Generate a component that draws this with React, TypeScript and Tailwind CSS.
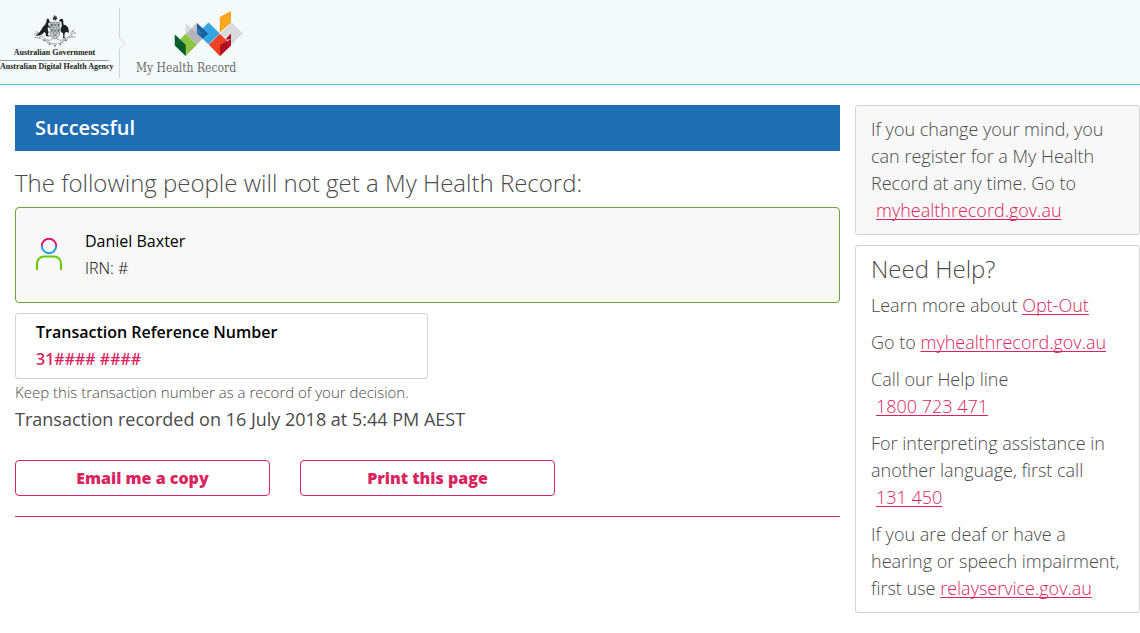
import type { ReactNode } from "react";

const CoatOfArms = () => {
  return (
    <svg
      viewBox="0 0 132 96"
      className="w-[44px] h-[32px]"
      role="img"
      aria-label="Coat of arms"
    >
      {/* star */}
      <path
        d="M66 1l2 4 4-1-1 4 3 3-4 2-1 4-4-2-4 1-0-4-3-3 4-2 0-5z"
        fill="#333"
      />
      {/* wattle */}
      <g fill="none" stroke="#8b9091" strokeWidth="2.5">
        <path d="M2 58c6-4 12-2 18 4M8 48c6 4 8 8 12 12M4 68c8-2 12 2 20 2" />
        <path d="M130 54c-8-2-12 2-18 6M124 44c-6 2-8 8-12 12M128 66c-8-2-14 2-22 2" />
        <path d="M20 62c12 2 16 14 28 14 10 0 12-8 18-8s8 8 18 8c12 0 18-12 28-12" />
        <path d="M26 72c8 8 18 2 22 12M106 72c-8 8-16 2-22 12M40 84c10-6 16 6 26 2 10 4 16-8 26-2" />
      </g>
      <g fill="#777c7d">
        <circle cx="14" cy="52" r="2" />
        <circle cx="20" cy="68" r="2" />
        <circle cx="34" cy="76" r="3" />
        <circle cx="50" cy="88" r="3" />
        <circle cx="66" cy="92" r="3" />
        <circle cx="82" cy="88" r="3" />
        <circle cx="98" cy="76" r="3" />
        <circle cx="116" cy="62" r="2" />
        <circle cx="120" cy="50" r="2" />
      </g>
      {/* shield */}
      <path
        d="M52 22h28v34c0 8-6 12-14 16-8-4-14-8-14-16z"
        fill="#d5dadb"
        stroke="#6f7475"
        strokeWidth="2"
      />
      <path
        d="M52 38h28M61 22v46M71 22v46M52 54h28"
        stroke="#7d8283"
        strokeWidth="2"
      />
      <g fill="#555a5b">
        <path d="M54 26h5v8h-5zM64 26h4v8h-4zM74 26h4v8h-4zM55 42h4v8h-4zM64 43h4v7h-4zM74 42h4v8h-4zM64 58h4v6h-4z" />
      </g>
      {/* kangaroo */}
      <path
        d="M42 9l2 4 4-2 0 6 4 5-6 2 0 7 7 6-1 2-7-3-1 7 3 9-3 9 8 1v2H38l1-8-5-5-7 7c-6 4-13 5-21 4 8-3 13-8 18-16 3-7 7-12 12-16l4-9z"
        fill="#1c1f20"
      />
      {/* emu */}
      <path
        d="M80 14c3-4 8-4 10 0 2 5 0 10 2 15 6 0 11 4 14 11l2 14-8-4-5 5-1 12 5 3H88l3-4-1-11c-6-3-8-8-7-14 2-5 4-7 3-12l-1-9-7-2z"
        fill="#1c1f20"
      />
    </svg>
  );
};

const RecordLogo = () => {
  return (
    <svg
      viewBox="163 32 208 136"
      className="w-[69px] h-[45px]"
      role="img"
      aria-label="My Health Record logo"
    >
      <path d="M198 68l34 32v34l-34-32z" fill="#d7d9db" />
      <path d="M232 68l-32 33 32 32 33-33z" fill="#b3b5b8" />
      <path d="M232 68l-17 17 17 15z" fill="#c5c7c9" />
      <path d="M267 67l34 33-34 33-34-33z" fill="#35a3df" />
      <path d="M232 68l34 33-17 15-17-16z" fill="#1a5f9f" />
      <path d="M232 82l17 18-17 0z" fill="#3a78b0" />
      <path d="M198 101l34 33-34 33-33-33z" fill="#8cc63e" />
      <path d="M165 103l33 31v34l-33-32z" fill="#045b2c" />
      <path d="M165 135l17-15 16 15" fill="none" stroke="#4f9150" strokeWidth="1.5" />
      <path d="M337 67l34 33-34 33-34-33z" fill="#d9dbdd" />
      <path d="M301 101l34 33-34 34-33-34z" fill="#ef4123" />
      <path d="M335 117v19l-33 32v-34z" fill="#b20f22" />
      <path d="M335 100v18l-17 0z" fill="#b20f22" />
      <path d="M318 118l17 17" stroke="#d5524d" strokeWidth="1.5" />
      <path d="M301 50l34-18v35l-34 31z" fill="#faa61f" />
      <path d="M233 100l34 33M267 133l34-33" stroke="#fff" strokeWidth="1" opacity=".5" />
    </svg>
  );
};

const PersonIcon = () => {
  return (
    <svg
      viewBox="0 1 26 34"
      className="w-[26px] h-[34px] shrink-0"
      fill="none"
      strokeWidth="2"
      aria-hidden="true"
    >
      <path d="M5.800 9a7.200 7.200 0 0 1 14.400 0" stroke="#e5106d" />
      <path d="M5.800 9a7.200 7.200 0 0 0 14.400 0" stroke="#15a4dc" />
      <path d="M1 33v-6.500a7 7 0 0 1 7-7h10a7 7 0 0 1 7 7V33" stroke="#66cc00" />
    </svg>
  );
};

const PinkLink = ({
  href,
  indent,
  children,
}: {
  href: string;
  indent?: boolean;
  children: ReactNode;
}) => {
  return (
    <a
      href={href}
      className={`text-[#d9245f] underline underline-offset-2 [text-decoration-skip-ink:none] ${
        indent ? "ml-[5px]" : ""
      }`}
    >
      {children}
    </a>
  );
};

const Header = () => {
  return (
    <header className="flex items-start h-[85px] bg-[#f4fafa] border-b border-[#4ac8d8]">
      <div className="flex flex-col items-center pt-[15px] w-[109px] font-['Liberation_Serif',serif] font-bold text-[#222] whitespace-nowrap">
        <CoatOfArms />
        <span className="text-[8px] leading-[12px]">Australian Government</span>
        <span className="w-full border-t border-[#999] mt-px" />
        <span className="self-start text-[8px] leading-[12px]">
          Australian Digital Health Agency
        </span>
      </div>
      <svg
        viewBox="0 0 8 70"
        className="w-[8px] h-[70px] mt-2 ml-[10px]"
        fill="none"
        stroke="#d2d6d7"
        aria-hidden="true"
      >
        <path d="M.5 0v30l5.500 5.500-5.500 5.500v29" />
      </svg>
      <div className="flex flex-col items-start pt-[11px] ml-[9px] text-[#6b6c6e] whitespace-nowrap">
        <div className="pl-[38px]">
          <RecordLogo />
        </div>
        <span className="font-['DejaVu_Serif_Condensed','DejaVu_Serif',serif] text-[12px] leading-[24px]">
          My Health Record
        </span>
      </div>
    </header>
  );
};

const Sidebar = () => {
  return (
    <aside className="w-1/4 flex flex-col gap-[10px] text-[18px] leading-[27px]">
      <div className="border border-[#d3d3d3] rounded-[3px] bg-[#f8f8f8] px-[15px] py-[10px]">
        <p>
          If you change your mind, you can register for a My Health Record at
          any time. Go to{" "}
          <PinkLink href="#myhealthrecord" indent>
            myhealthrecord.gov.au
          </PinkLink>
        </p>
      </div>
      <div className="flex flex-col gap-[10px] border border-[#d3d3d3] rounded-[3px] px-[15px] pt-[9px] pb-[10px]">
        <h2 className="text-[24px] leading-[27px]">Need Help?</h2>
        <p>
          Learn more about <PinkLink href="#opt-out">Opt-Out</PinkLink>
        </p>
        <p>
          Go to{" "}
          <PinkLink href="#myhealthrecord">myhealthrecord.gov.au</PinkLink>
        </p>
        <p>
          Call our Help line
          <br />
          <PinkLink href="tel:1800723471" indent>
            1800 723 471
          </PinkLink>
        </p>
        <p>
          For interpreting assistance in another language, first call
          <br />
          <PinkLink href="tel:131450" indent>
            131 450
          </PinkLink>
        </p>
        <p>
          If you are deaf or have a hearing or speech impairment, first use{" "}
          <PinkLink href="#relayservice">relayservice.gov.au</PinkLink>
        </p>
      </div>
    </aside>
  );
};

const App = () => {
  return (
    <div className="min-h-screen bg-white font-['Open_Sans',sans-serif] font-light text-[#4a4a4a]">
      <Header />
      <div className="flex items-start pt-5">
        <main className="w-3/4 px-[15px]">
          <h1 className="bg-[#1f6db2] text-white font-semibold text-[20px] leading-[46px] px-5">
            Successful
          </h1>
          <h2 className="text-[24px] leading-[36px] pt-[14px] pb-[6px]">
            The following people will not get a My Health Record:
          </h2>
          <div className="flex items-center gap-[23px] border border-[#6ba43a] rounded-[4px] bg-[#f8f8f8] px-5 py-5 text-black text-[16px] leading-[27px]">
            <PersonIcon />
            <div>
              <p className="font-normal">Daniel Baxter</p>
              <p>IRN: #</p>
            </div>
          </div>
          <div className="w-1/2 mt-[10px] border border-[#d3d3d3] rounded-[3px] px-5 py-[5px] text-[16px] leading-[27px] font-semibold">
            <p className="text-black">Transaction Reference Number</p>
            <p className="text-[#d9245f]">31#### ####</p>
          </div>
          <p className="text-[15px] leading-[27px]">
            Keep this transaction number as a record of your decision.
          </p>
          <p className="text-[18px] leading-[27px] font-normal">
            Transaction recorded on 16 July 2018 at 5:44 PM AEST
          </p>
          <div className="flex gap-[30px] mt-[27px] text-[16px] font-extrabold text-[#d9245f]">
            <button className="w-[255px] h-[36px] border border-[#d9245f] rounded-[4px]">
              Email me a copy
            </button>
            <button className="w-[255px] h-[36px] border border-[#d9245f] rounded-[4px]">
              Print this page
            </button>
          </div>
          <hr className="mt-5 border-[#d9245f]" />
        </main>
        <Sidebar />
      </div>
    </div>
  );
};

export default App;
